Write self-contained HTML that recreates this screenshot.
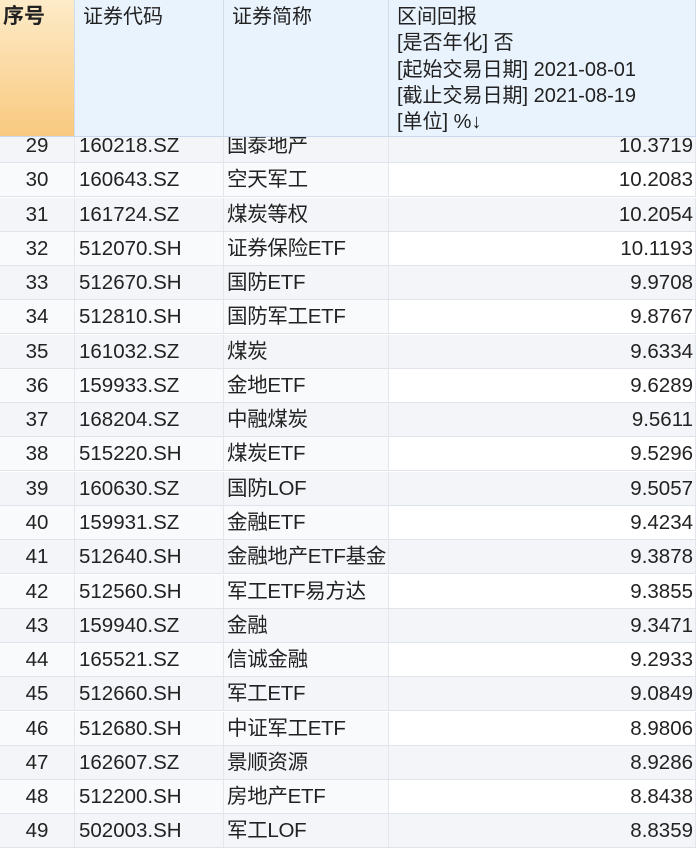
<!DOCTYPE html>
<html><head><meta charset="utf-8"><style>
body{margin:0;width:700px;height:842px;overflow:hidden;background:#fff;font-family:"Liberation Sans","Noto Sans CJK SC",sans-serif;color:#222;position:relative}
.hd{position:absolute;top:0;height:137px;background:#e9f3fd;border-right:1px solid #cfdcea;border-bottom:1px solid #c9d8ea;box-sizing:border-box;font-size:20px;line-height:26.3px;padding:4px 0 0 8px;white-space:nowrap}
.row{position:absolute;left:0;width:696px;height:34px;border-bottom:1px solid #dfe4ea;box-sizing:border-box;font-size:20.5px;line-height:34px;white-space:nowrap}
.row div{position:absolute;top:0;height:33px;border-right:1px solid #e2e7ee;box-sizing:border-box}
.o div{background:#f3f5f8}
.e .a,.e .b,.e .c{background:#f9fafc}
.e .d{background:#fff}
.a{left:0;width:75px;text-align:center}
.b{left:75px;width:149px;padding-left:4px}
.c{left:224px;width:165px;padding-left:3px;letter-spacing:-0.3px}
.d{left:389px;width:307px;text-align:right;padding-right:2px}
</style></head><body>
<div id="rows"></div>
<div class="hd" style="left:0;width:75px;padding-left:3px;font-weight:bold;font-size:21px;background:linear-gradient(#fdebc8,#f9c97f)">序号</div>
<div class="hd" style="left:75px;width:149px">证券代码</div>
<div class="hd" style="left:224px;width:165px">证券简称</div>
<div class="hd" style="left:389px;width:307px;padding-left:8px">区间回报<br>[是否年化] 否<br>[起始交易日期] 2021-08-01<br>[截止交易日期] 2021-08-19<br>[单位] %↓</div>
<script>
var d=[[29,"160218.SZ","国泰地产","10.3719"],[30,"160643.SZ","空天军工","10.2083"],[31,"161724.SZ","煤炭等权","10.2054"],[32,"512070.SH","证券保险ETF","10.1193"],[33,"512670.SH","国防ETF","9.9708"],[34,"512810.SH","国防军工ETF","9.8767"],[35,"161032.SZ","煤炭","9.6334"],[36,"159933.SZ","金地ETF","9.6289"],[37,"168204.SZ","中融煤炭","9.5611"],[38,"515220.SH","煤炭ETF","9.5296"],[39,"160630.SZ","国防LOF","9.5057"],[40,"159931.SZ","金融ETF","9.4234"],[41,"512640.SH","金融地产ETF基金","9.3878"],[42,"512560.SH","军工ETF易方达","9.3855"],[43,"159940.SZ","金融","9.3471"],[44,"165521.SZ","信诚金融","9.2933"],[45,"512660.SH","军工ETF","9.0849"],[46,"512680.SH","中证军工ETF","8.9806"],[47,"162607.SZ","景顺资源","8.9286"],[48,"512200.SH","房地产ETF","8.8438"],[49,"502003.SH","军工LOF","8.8359"]];
var h="";d.forEach(function(r,i){var t=129+i*34.27;h+='<div class="row '+(r[0]%2?'o':'e')+'" style="top:'+t+'px"><div class="a">'+r[0]+'</div><div class="b">'+r[1]+'</div><div class="c">'+r[2]+'</div><div class="d">'+r[3]+'</div></div>';});
document.getElementById("rows").innerHTML=h;
</script>
</body></html>
